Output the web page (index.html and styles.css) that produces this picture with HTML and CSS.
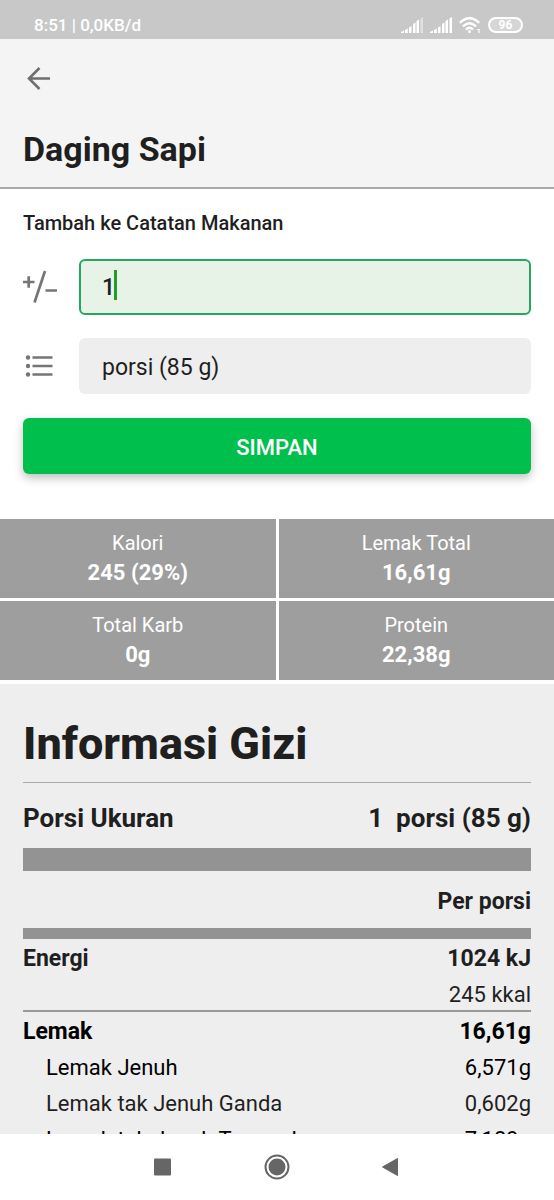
FILE: index.html
```html
<!DOCTYPE html>
<html lang="id">
  <head>
    <meta charset="utf-8" />
    <meta name="viewport" content="width=device-width, initial-scale=1" />
    <title>Daging Sapi</title>
    <link rel="stylesheet" href="styles.css">
  </head>
  <body>
    <div class="status-bar">
      <span>8:51 | 0,0KB/d</span>
      <div class="status-icons">
        <svg width="22" height="16" viewBox="0 0 22 16" fill="#fff">
          <path d="M0 16v-1l3-1.500V16zM4 13l2.800-1.500V16H4zM8 10.500l2.500-1.500v7H8zM12 7l2.500-1.500V16H12zM15.500 4L18 2.500V16h-2.500z" />
          <path d="M19.500 1.500L22 0v16h-2.500z" opacity=".45" />
        </svg>
        <svg width="22" height="16" viewBox="0 0 22 16" fill="#fff">
          <path d="M0 16v-1l3-1.500V16zM4 13l2.800-1.500V16H4zM8 10.500l2.500-1.500v7H8zM12 7l2.500-1.500V16H12zM15.500 4L18 2.500V16h-2.500zM19.500 1.500L22 0v16h-2.500z" />
        </svg>
        <svg width="22" height="16" viewBox="0 0 22 16" fill="none" stroke="#fff" stroke-width="2.400">
          <path d="M.8 5.800Q10.500-3.400 20.200 5.800M4 9.300Q10.500 3 17 9.300M7 12.600Q10.500 9 14 12.600" />
          <circle cx="10.500" cy="14.500" r="1.500" fill="#fff" stroke="none" />
          <path d="M20 12v4.500M18 12.500h2" stroke-width="1.200" />
        </svg>
        <span class="battery">96</span>
      </div>
    </div>

    <header class="header">
      <button class="back" type="button" aria-label="Kembali">
        <svg width="24" height="24" viewBox="0 0 24 24" fill="none" stroke="#6f6f6f" stroke-width="2.600">
          <path d="M23 12.500H2.500M12.500 2L2 12.500 12.500 23" />
        </svg>
      </button>
      <h1>Daging Sapi</h1>
    </header>

    <main class="content">
      <form class="form">
        <h2 class="form-title">Tambah ke Catatan Makanan</h2>
        <div class="field">
          <label for="amount" aria-label="Jumlah">
            <svg width="34" height="34" viewBox="0 0 34 34" fill="none" stroke="#757575" stroke-width="2.700">
              <path d="M0 12h11.500M5.700 6.200v11.600M22 1L11.500 32.500M22.500 20.500H34" />
            </svg>
          </label>
          <div class="amount">
            <input id="amount" type="text" inputmode="decimal" value="1" />
            <span class="caret"></span>
          </div>
        </div>
        <div class="field">
          <label for="unit" aria-label="Satuan">
            <svg width="34" height="34" viewBox="0 0 34 34" fill="#757575" stroke="#757575">
              <path d="M9.500 8.500h20M9.500 17h20M9.500 25.500h20" stroke-width="2.700" />
              <g stroke="none">
                <circle cx="5" cy="8.500" r="2.200" />
                <circle cx="5" cy="17" r="2.200" />
                <circle cx="5" cy="25.500" r="2.200" />
              </g>
            </svg>
          </label>
          <select id="unit">
            <option>porsi (85 g)</option>
          </select>
        </div>
        <button class="save" type="submit">SIMPAN</button>
      </form>

      <dl class="summary">
        <div>
          <dt>Kalori</dt>
          <dd>245 (29%)</dd>
        </div>
        <div>
          <dt>Lemak Total</dt>
          <dd>16,61g</dd>
        </div>
        <div>
          <dt>Total Karb</dt>
          <dd>0g</dd>
        </div>
        <div>
          <dt>Protein</dt>
          <dd>22,38g</dd>
        </div>
      </dl>

      <section class="facts">
        <h2>Informasi Gizi</h2>
        <table>
          <tr class="serving">
            <th>Porsi Ukuran</th>
            <td>1&nbsp; porsi (85 g)</td>
          </tr>
          <tr class="per">
            <th></th>
            <td>Per porsi</td>
          </tr>
          <tr class="main">
            <th>Energi</th>
            <td>1024 kJ</td>
          </tr>
          <tr class="kcal">
            <th></th>
            <td>245 kkal</td>
          </tr>
          <tr class="main dark">
            <th>Lemak</th>
            <td>16,61g</td>
          </tr>
          <tr class="dark">
            <th>Lemak Jenuh</th>
            <td>6,571g</td>
          </tr>
          <tr>
            <th>Lemak tak Jenuh Ganda</th>
            <td>0,602g</td>
          </tr>
          <tr class="dark">
            <th>Lemak tak Jenuh Tunggal</th>
            <td>7,189g</td>
          </tr>
        </table>
      </section>
    </main>

    <nav class="nav-bar">
      <button type="button" aria-label="Terkini">
        <svg width="26" height="26" viewBox="0 0 26 26">
          <rect x="4" y="4.500" width="17" height="17" rx="1" fill="#666" />
        </svg>
      </button>
      <button type="button" aria-label="Beranda">
        <svg width="26" height="26" viewBox="0 0 26 26">
          <circle cx="13" cy="13" r="11.500" fill="none" stroke="#666" stroke-width="2" />
          <circle cx="13" cy="13" r="8.500" fill="#666" />
        </svg>
      </button>
      <button type="button" aria-label="Kembali ke layar sebelumnya">
        <svg width="26" height="26" viewBox="0 0 26 26">
          <path d="M4.500 13l15-8.500v17z" fill="#666" stroke="#666" stroke-linejoin="round" />
        </svg>
      </button>
    </nav>
  </body>
</html>
```
FILE: styles.css
```css
* {
  box-sizing: border-box;
}

body {
  margin: 0;
  height: 100vh;
  display: flex;
  flex-direction: column;
  overflow: hidden;
  background: #fff;
  color: #1f1f1f;
  font-family: Roboto, sans-serif;
  font-size: 22px;
}

h1,
h2,
dl,
dd {
  margin: 0;
}

button,
input,
select {
  font: inherit;
  color: inherit;
  border: none;
  outline: none;
}

button {
  background: none;
  padding: 0;
}

svg {
  display: block;
}

/* Status bar */
.status-bar {
  display: flex;
  justify-content: space-between;
  align-items: center;
  padding: 10px 31px 0 34px;
  height: 39px;
  background: #c8c8c8;
  color: #fff;
  font-size: 17px;
  font-weight: 500;
}

.status-icons {
  display: flex;
  align-items: center;
  gap: 7px;
}

.battery {
  width: 35px;
  border: 2px solid #fff;
  border-radius: 8px;
  background: #d6d6d6;
  font-size: 12px;
  font-weight: 700;
  line-height: 12px;
  text-align: center;
}

/* Header */
.header {
  padding: 27px 23px 18px;
  background: #f4f4f4;
  border-bottom: 2px solid #aaa;
}

.back {
  display: block;
  margin: 0 0 39px 4px;
}

.header h1 {
  font-size: 34px;
  font-weight: 700;
  line-height: 40px;
}

.content {
  flex: 1;
  min-height: 0;
  overflow: hidden;
}

/* Form */
.form {
  display: flex;
  flex-direction: column;
  gap: 23px;
  padding: 22px 23px 45px;
}

.form-title {
  font-size: 20px;
  font-weight: 500;
  line-height: 25px;
}

.field {
  display: flex;
  align-items: center;
  gap: 22px;
}

.amount {
  position: relative;
  flex: 1;
}

.field input,
.field select {
  display: block;
  width: 100%;
  height: 56px;
  padding: 2px 23px 0;
  border-radius: 6px;
  font-size: 23px;
}

.field input {
  background: #e7f3e7;
  border: 2px solid #27a65f;
  padding: 0 21px;
  font-weight: 500;
}

.caret {
  position: absolute;
  left: 35px;
  top: 11px;
  width: 3px;
  height: 30px;
  background: #259b24;
}

.field select {
  flex: 1;
  background: #eee;
  appearance: none;
}

.save {
  height: 56px;
  margin-top: 1px;
  padding-top: 2px;
  border-radius: 6px;
  background: #00bf4c;
  box-shadow: 0 4px 10px rgba(0, 0, 0, 0.25);
  color: #fff;
  font-weight: 500;
}

/* Summary */
.summary {
  display: grid;
  grid-template-columns: 1fr 1fr;
  gap: 3px;
  padding-bottom: 4px;
  color: #fff;
  text-align: center;
}

.summary div {
  padding: 10px 0 11px;
  background: #9e9e9e;
}

.summary dt {
  font-size: 20px;
  line-height: 29px;
}

.summary dd {
  font-weight: 700;
  line-height: 29px;
}

/* Nutrition facts */
.facts {
  padding: 32px 23px 0;
  background: #eee;
}

.facts h2 {
  padding-bottom: 10px;
  border-bottom: 1px solid #aaa;
  font-size: 45px;
  font-weight: 800;
  line-height: 56px;
}

.facts table {
  width: 100%;
  border-spacing: 0;
}

.facts th,
.facts td {
  height: 36px;
  padding: 4px 0 0;
  font-weight: 400;
  line-height: 28px;
  text-align: right;
}

.facts th {
  padding-left: 23px;
  text-align: left;
}

.facts .serving > *,
.facts .per > *,
.facts .main > * {
  padding-left: 0;
  font-size: 23px;
  font-weight: 700;
}

.facts .serving > * {
  height: 88px;
  border-bottom: 23px solid #939393;
  font-size: 26px;
}

.facts .per > * {
  height: 68px;
  border-bottom: 11px solid #939393;
}

.facts .kcal > * {
  height: 37px;
  border-bottom: 2px solid #999;
}

.dark {
  color: #000;
}

/* Navigation bar */
.nav-bar {
  display: flex;
  justify-content: center;
  align-items: center;
  gap: 88px;
  height: 66px;
  background: #fff;
}
```
